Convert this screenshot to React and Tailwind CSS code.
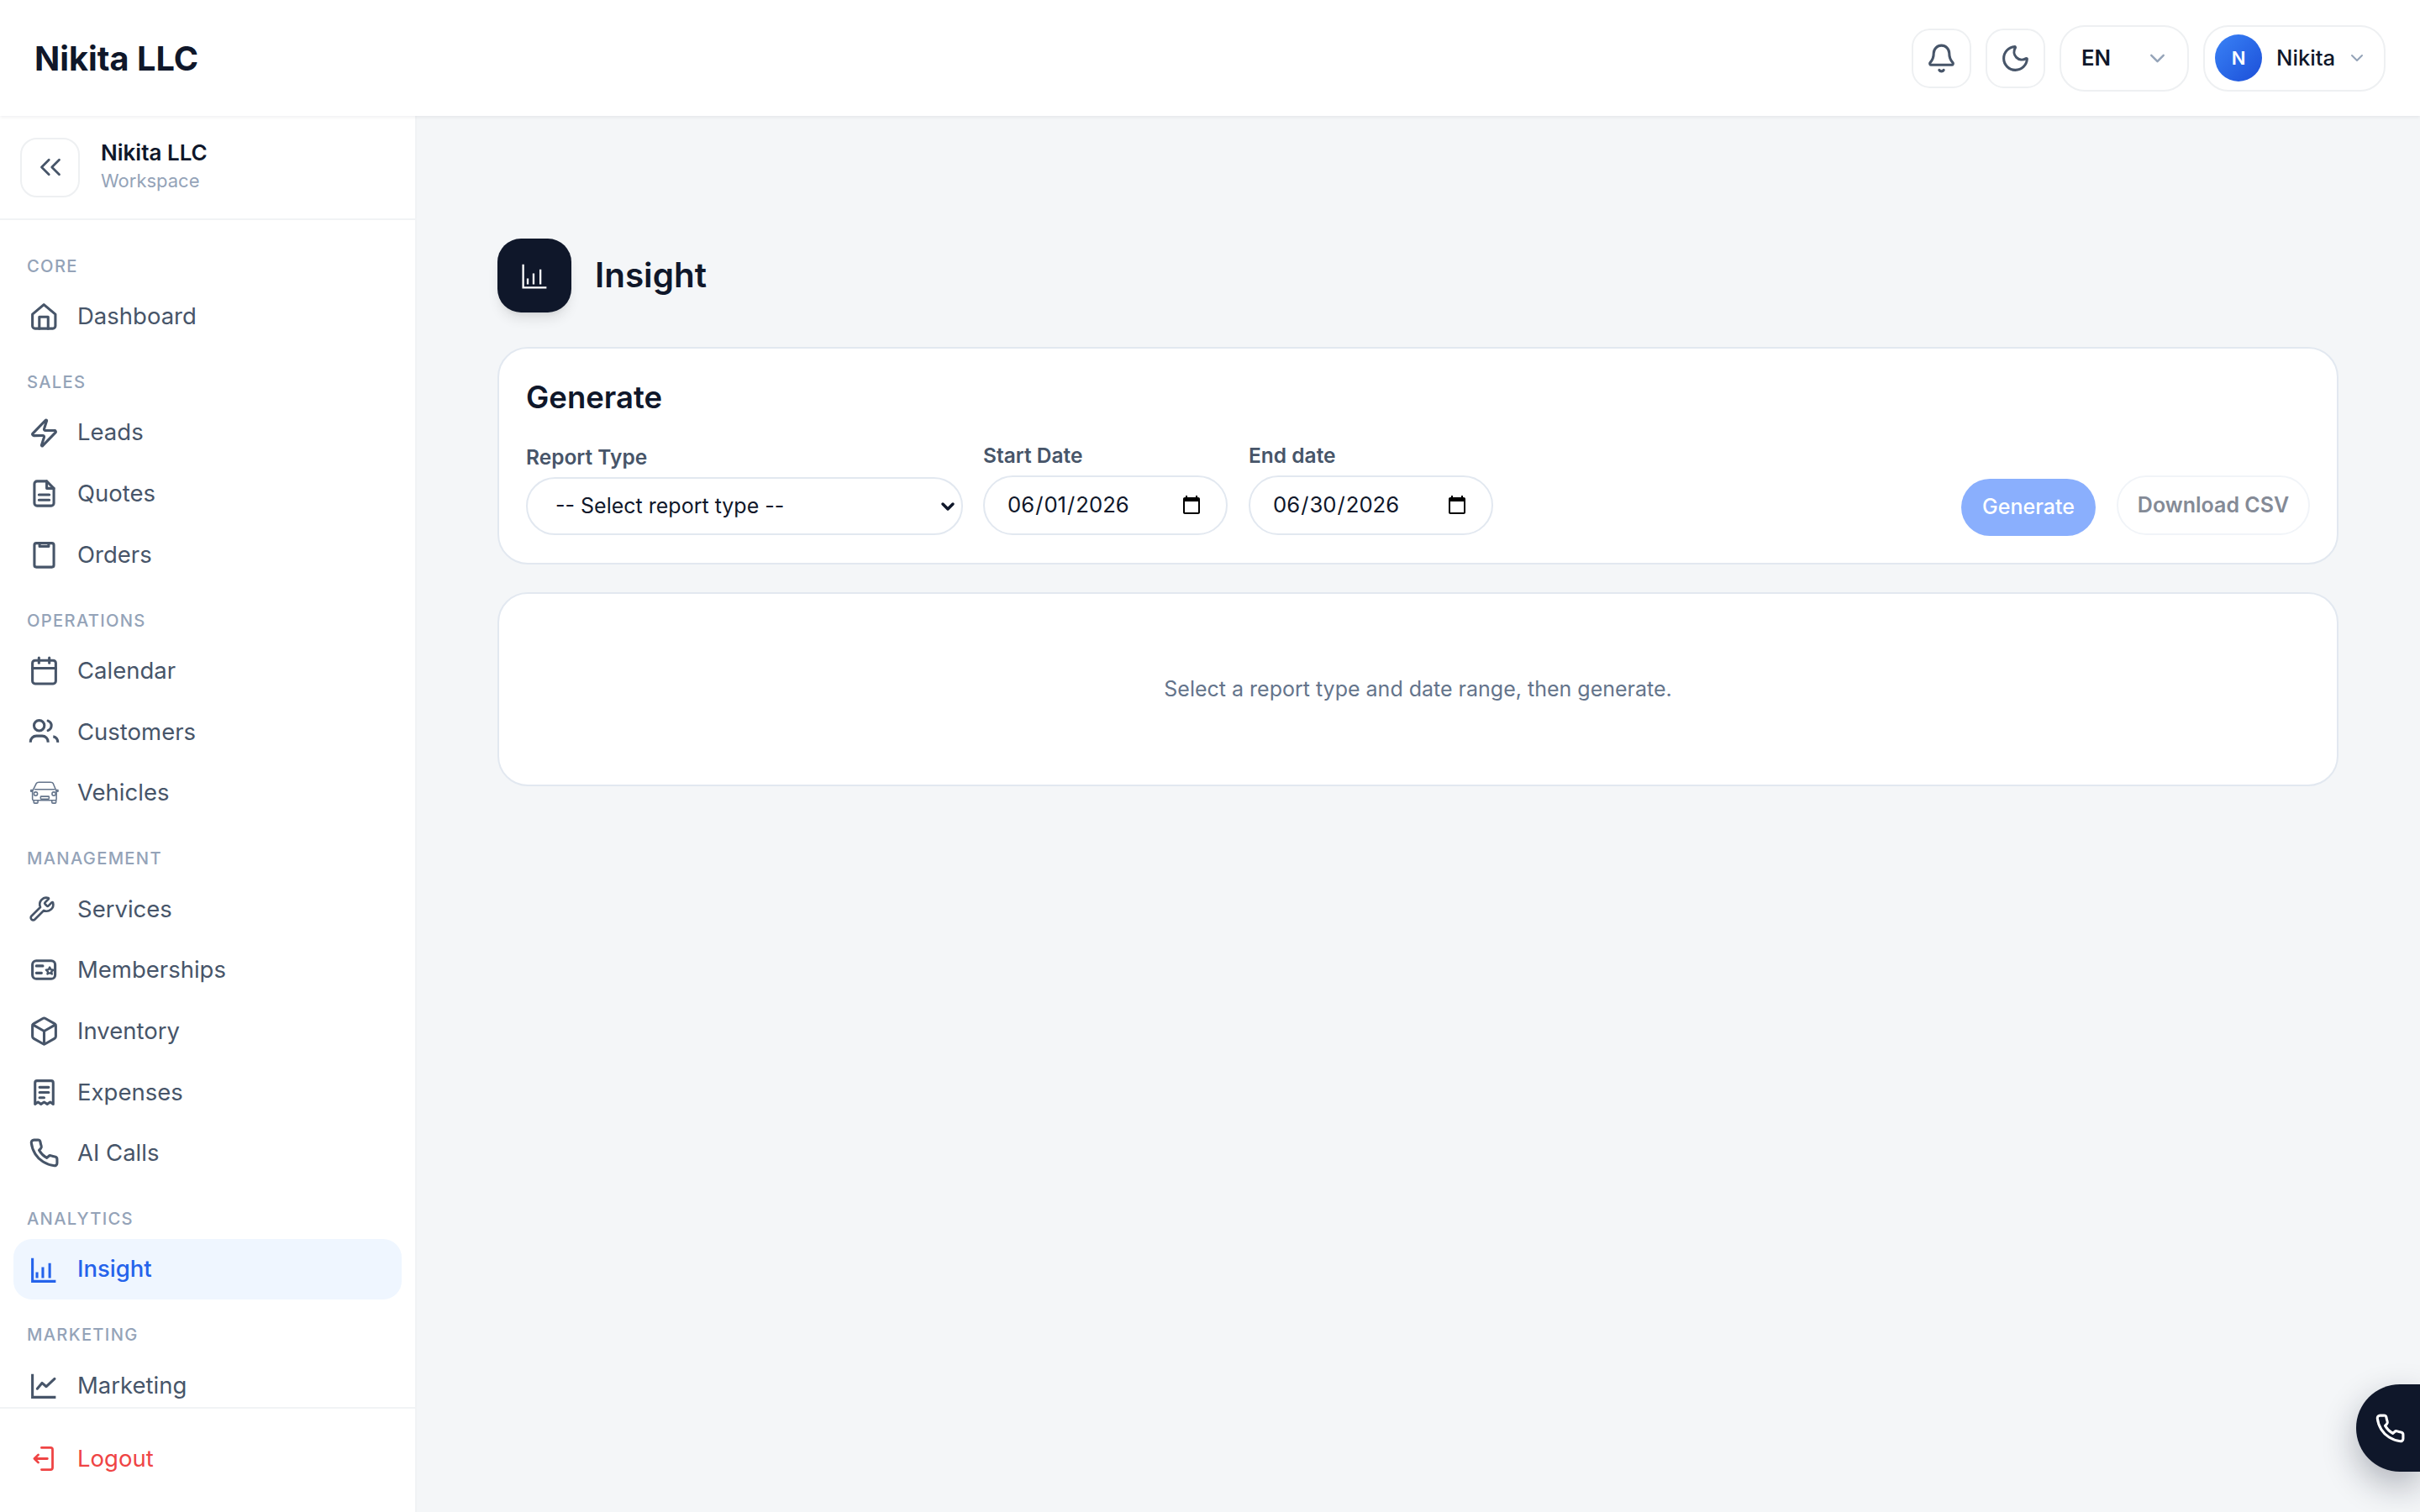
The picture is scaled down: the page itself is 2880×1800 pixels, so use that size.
import React from 'react';
import { Bell, Box, Calendar, ChevronDown, ChevronsLeft, Moon, Wrench, Zap } from 'lucide-react';

const Svg = ({ children, size = 37, className = '', strokeWidth = 2 }) => (
  <svg width={size} height={size} viewBox="0 0 24 24" fill="none" stroke="currentColor" strokeWidth={strokeWidth} strokeLinecap="round" strokeLinejoin="round" className={`shrink-0 ${className}`}>
    {children}
  </svg>
);

const HomeIcon = () => (
  <Svg>
    <path d="M3 10.500 11.800 3l8.900 7.500v9a2 2 0 0 1-2 2H5a2 2 0 0 1-2-2z" />
    <path d="M8.300 21.500V12.500h6.800v9" />
  </Svg>
);

const QuoteIcon = () => (
  <Svg>
    <path d="M14 2.500H6.500a2 2 0 0 0-2 2v15a2 2 0 0 0 2 2h11a2 2 0 0 0 2-2V8z" />
    <path d="M14 2.500V8h5.500" />
    <path d="M8 13h8M8 17h8" />
  </Svg>
);

const OrderIcon = () => (
  <Svg>
    <rect x="4.500" y="3" width="15" height="18.500" rx="1.500" />
    <path d="M8.500 3v2.500h7V3" />
  </Svg>
);

const UsersIcon = () => (
  <Svg>
    <circle cx="8.200" cy="7" r="4" />
    <path strokeLinecap="butt" d="M1.500 20v-.5a4.500 4.500 0 0 1 4.500-4.500h4.500a4.500 4.500 0 0 1 4.500 4.500v.5" />
    <path d="M15 3.300a4 4 0 0 1 0 7.500" />
    <path strokeLinecap="butt" d="M19 15.500a4 4 0 0 1 3.500 4.500" />
  </Svg>
);

const CarIcon = () => (
  <Svg strokeWidth={1} className="text-[#64748b]">
    <path d="M3 11 6 5q.5-1 2-1h9q1.500 0 2 1l2.500 6v6q0 1-1 1H4q-1 0-1-1z" />
    <path d="M5 9.500h15" />
    <circle cx="5.500" cy="13" r="1.400" />
    <circle cx="19.500" cy="13" r="1.400" />
    <rect x="9.300" y="15" width="6.500" height="2" rx=".4" />
    <path d="M4 18v1.500a.7.7 0 0 0 .7.7h1.800a.7.7 0 0 0 .7-.7V18M18 18v1.500a.7.7 0 0 0 .7.7h1.800a.7.7 0 0 0 .7-.7V18" />
    <path d="M3 10H1.800v1.200H3M21.500 10h1.200v1.200h-1.200" />
  </Svg>
);

const BarsIcon = ({ strokeWidth = 2 }) => (
  <Svg strokeWidth={strokeWidth}>
    <path strokeLinecap="butt" strokeLinejoin="miter" d="M3 3v18h18" />
    <path strokeLinecap="butt" d="M6.500 18.500V14M11 18.500V10M16.300 18.500V7" />
  </Svg>
);

const LineIcon = () => (
  <Svg>
    <path strokeLinecap="butt" strokeLinejoin="miter" d="M3 3v18h18" />
    <path d="m6.700 14.400 3.700-4.400 3.300 2.800 6.400-6" />
  </Svg>
);

const CardIcon = () => (
  <Svg>
    <rect x="3" y="5" width="17.500" height="14" rx="3" />
    <path d="M6 9h5M6 14.500h4" />
    <path strokeWidth="1.500" d="m16.300 10 .9 1.800 1.900.3-1.400 1.300.35 1.900-1.750-.9-1.750.9.35-1.900-1.400-1.300 1.900-.3z" />
  </Svg>
);

const ReceiptIcon = () => (
  <Svg>
    <path d="M5 21V4.500A1.500 1.500 0 0 1 6.500 3h11A1.500 1.500 0 0 1 19 4.500V21l-2.300-1.500-2.300 1.500-2.400-1.500-2.400 1.500-2.300-1.500z" />
    <path d="M8.500 8h7M8.500 12h7M8.500 16h3.500" />
  </Svg>
);

const PhoneIcon = () => (
  <Svg>
    <path d="M22 16.920v3a2 2 0 0 1-2.180 2 19.790 19.790 0 0 1-8.630-3.070 19.500 19.500 0 0 1-6-6 19.790 19.790 0 0 1-3.070-8.670A2 2 0 0 1 4.110 2h3a2 2 0 0 1 2 1.720 12.840 12.840 0 0 0 .7 2.810 2 2 0 0 1-.45 2.110L8.090 9.910a16 16 0 0 0 6 6l1.270-1.270a2 2 0 0 1 2.110-.45 12.840 12.840 0 0 0 2.810.7A2 2 0 0 1 22 16.920z" />
  </Svg>
);

const LogoutIcon = () => (
  <Svg strokeWidth={1.800}>
    <path d="M10 3.500h7a1.500 1.500 0 0 1 1.500 1.500v14a1.500 1.500 0 0 1-1.500 1.500h-7" />
    <path d="M14.500 12H4.500M7.500 9l-3 3 3 3" />
  </Svg>
);

const nav = [
  { title: 'CORE', items: [{ label: 'Dashboard', icon: <HomeIcon /> }] },
  {
    title: 'SALES',
    items: [
      { label: 'Leads', icon: <Zap size={37} /> },
      { label: 'Quotes', icon: <QuoteIcon /> },
      { label: 'Orders', icon: <OrderIcon /> },
    ],
  },
  {
    title: 'OPERATIONS',
    items: [
      { label: 'Calendar', icon: <Calendar size={37} /> },
      { label: 'Customers', icon: <UsersIcon /> },
      { label: 'Vehicles', icon: <CarIcon /> },
    ],
  },
  {
    title: 'MANAGEMENT',
    items: [
      { label: 'Services', icon: <Wrench size={32} className="mr-[5px]" /> },
      { label: 'Memberships', icon: <CardIcon /> },
      { label: 'Inventory', icon: <Box size={37} /> },
      { label: 'Expenses', icon: <ReceiptIcon /> },
      { label: 'AI Calls', icon: <PhoneIcon /> },
    ],
  },
  { title: 'ANALYTICS', items: [{ label: 'Insight', icon: <BarsIcon />, active: true }] },
  { title: 'MARKETING', items: [{ label: 'Marketing', icon: <LineIcon /> }] },
];

function Sidebar() {
  return (
    <aside className="w-[496px] shrink-0 bg-white border-r-2 border-[#f1f3f5] flex flex-col min-h-0">
      <div className="h-[124px] shrink-0 border-b-2 border-[#f1f3f5] flex items-center gap-[25px] pl-[24px]">
        <button className="w-[71px] h-[71px] rounded-[20px] border-2 border-[#eef0f2] flex items-center justify-center text-[#475569]">
          <ChevronsLeft size={42} strokeWidth={1.600} />
        </button>
        <div>
          <div className="text-[26px] leading-[33px] font-semibold text-[#0f172a]">Nikita LLC</div>
          <div className="text-[22px] leading-[35px] text-[#94a3b8]">Workspace</div>
        </div>
      </div>
      <nav className="flex-1 min-h-0 overflow-hidden pt-[43px] px-[16px]">
        {nav.map((group) => (
          <div key={group.title} className="mb-[30px]">
            <div className="h-[24px] leading-[24px] mb-[11.500px] pl-[16px] text-[20.200px] font-medium tracking-[1.300px] text-[#94a3b8]">{group.title}</div>
            {group.items.map((item) => (
              <div
                key={item.label}
                className={`h-[72.700px] rounded-[22px] pl-[18px] flex items-center gap-[21px] text-[27.500px] ${item.active ? 'bg-[#eff6ff] text-[#2563eb] font-medium' : 'text-[#475569]'}`}
              >
                {item.icon}
                <span>{item.label}</span>
              </div>
            ))}
          </div>
        ))}
      </nav>
      <div className="h-[125px] shrink-0 border-t-2 border-[#f1f3f5] flex items-center gap-[21px] pl-[34px] pb-[4px] text-[27.500px] text-[#ef4444]">
        <LogoutIcon />
        <span>Logout</span>
      </div>
    </aside>
  );
}

function TopBar() {
  return (
    <header className="relative z-10 h-[138px] shrink-0 bg-white shadow-[0_2px_4px_rgba(15,23,42,0.06)] flex items-center pl-[41px] pr-[41px]">
      <div className="text-[39.700px] pt-[3px] font-bold text-[#0f172a]">Nikita LLC</div>
      <div className="ml-auto flex items-center gap-[17px]">
        <button className="w-[71px] h-[71px] rounded-[22px] border-2 border-[#eef0f2] flex items-center justify-center text-[#475569]">
          <Bell size={37} />
        </button>
        <button className="w-[71px] h-[71px] rounded-[22px] border-2 border-[#eef0f2] flex items-center justify-center text-[#475569]">
          <Moon size={37} />
        </button>
        <div className="w-[154px] h-[79px] rounded-[30px] border-2 border-[#eef0f2] flex items-center pl-[24px] text-[25.700px] font-semibold text-[#0f172a]">
          <span>EN</span>
          <ChevronDown size={29} className="ml-auto mr-[21px] text-[#94a3b8]" />
        </div>
        <div className="w-[217px] h-[79px] rounded-[30px] border-2 border-[#eef0f2] flex items-center pl-[12px] text-[25.700px] font-medium text-[#0f172a]">
          <div className="w-[56px] h-[56px] rounded-full bg-gradient-to-br from-[#3b82f6] to-[#1d4ed8] flex items-center justify-center text-white text-[22px] font-semibold">N</div>
          <span className="ml-[17px]">Nikita</span>
          <ChevronDown size={24} className="ml-auto mr-[20px] text-[#94a3b8]" />
        </div>
      </div>
    </header>
  );
}

const fieldClass = 'h-[71px] rounded-full border-2 border-[#e2e8f0] bg-white text-[#0f172a]';

function Field({ label, children, className = '' }) {
  return (
    <label className={`block ${className}`}>
      <div className="text-[24.500px] leading-[36px] font-semibold text-[#475569] mb-[6px]">{label}</div>
      {children}
    </label>
  );
}

function Main() {
  return (
    <main className="flex-1 min-w-0 bg-[#f4f6f8] pl-[96px] pr-[97px] pt-[146px]">
      <div className="flex items-center gap-[28px] mb-[41px]">
        <div className="w-[88px] h-[88px] rounded-[28px] bg-[#0f172a] shadow-lg flex items-center justify-center text-white">
          <BarsIcon strokeWidth={1.500} />
        </div>
        <h1 className="text-[40.400px] font-semibold text-[#0f172a]">Insight</h1>
      </div>

      <section className="h-[259px] rounded-[36px] border-2 border-[#e2e8f0] bg-white pt-[32px] px-[32px] mb-[33px]">
        <h2 className="text-[36.500px] leading-[52px] font-semibold text-[#0f172a] mb-[25px]">Generate</h2>
        <div className="flex items-end gap-[25px]">
          <Field label="Report Type" className="w-[520px] mb-px -mr-px">
            <div className="relative">
              <select className={`${fieldClass} !h-[69px] w-full appearance-none pl-[33px] pr-[50px] text-[25px]`}>
                <option>-- Select report type --</option>
              </select>
              <ChevronDown size={24} strokeWidth={3.500} className="absolute right-[6px] top-[23px] text-[#0f172a] pointer-events-none" />
            </div>
          </Field>
          <Field label="Start Date" className="w-[291px] mb-px">
            <input type="date" defaultValue="2026-06-01" className={`${fieldClass} w-full px-[26px] text-[25.700px]`} />
          </Field>
          <Field label="End date" className="w-[291px] mb-px">
            <input type="date" defaultValue="2026-06-30" className={`${fieldClass} w-full px-[26px] text-[25.700px]`} />
          </Field>
          <div className="ml-auto flex items-end gap-[25px]">
            <button className="w-[160px] h-[68px] rounded-full bg-[#8aaffd] text-white text-[25px] font-medium">Generate</button>
            <button className="w-[230px] h-[71px] mb-px rounded-full border-2 border-[#f1f4f8] text-[#848a96] text-[25px] font-semibold">Download CSV</button>
          </div>
        </div>
      </section>

      <section className="h-[231px] rounded-[36px] border-2 border-[#e2e8f0] bg-white flex items-center justify-center text-[25px] text-[#64748b]">
        Select a report type and date range, then generate.
      </section>
    </main>
  );
}

export default function App() {
  return (
    <div className="h-[1800px] flex flex-col overflow-hidden font-['Inter',sans-serif]">
      <TopBar />
      <div className="flex-1 flex min-h-0">
        <Sidebar />
        <Main />
      </div>
      <button className="fixed right-0 top-[1648px] w-[76px] h-[104px] rounded-l-full bg-[#0f172a] shadow-[0_16px_40px_rgba(15,23,42,0.3)] flex items-center pl-[22px] text-white">
        <PhoneIcon />
      </button>
    </div>
  );
}
